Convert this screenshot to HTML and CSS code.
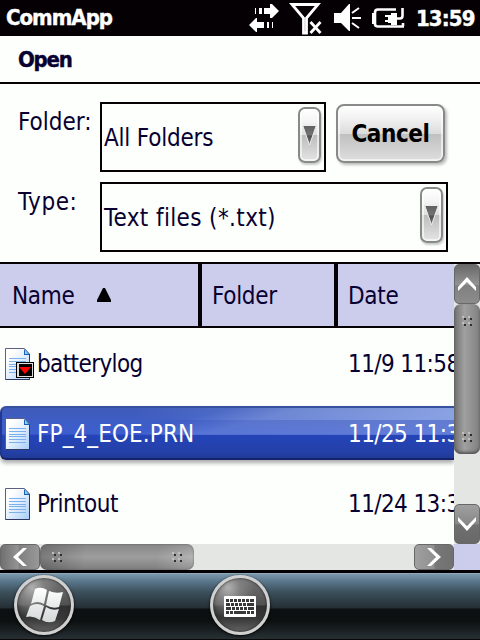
FILE: index.html
```html
<!DOCTYPE html>
<html lang="en">
<head>
<meta charset="utf-8">
<title>CommApp</title>
<link rel="stylesheet" href="styles.css">
</head>
<body>
<svg width="0" height="0" class="defs" aria-hidden="true">
  <defs>
    <linearGradient id="paper" x1="0" y1="0" x2="1" y2="1"><stop offset="0.2" stop-color="#fff"/><stop offset="0.5" stop-color="#e4f0fc"/><stop offset="1" stop-color="#a4ccfa"/></linearGradient>
    <linearGradient id="tri" x1="0" y1="0" x2="0" y2="1"><stop offset="0" stop-color="#606060"/><stop offset="0.5" stop-color="#747474"/><stop offset="0.52" stop-color="#505050"/><stop offset="1" stop-color="#707070"/></linearGradient>
    <linearGradient id="flag" x1="0" y1="0" x2="0" y2="1"><stop offset="0" stop-color="#fff"/><stop offset="1" stop-color="#d4d8d8"/></linearGradient>
    <g id="doc">
      <path d="M.5 .5H19.500L24.500 6V31.500H.5Z" fill="url(#paper)" stroke="#5c6080"/>
      <path d="M24.500 6V31.500H.5" fill="none" stroke="#303860"/>
      <path d="M19 1V7H25Z" fill="#1860b8"/><path d="M20 2V6H23Z" fill="#80dcff"/>
      <path d="M4 10.500H21M4 13.500H21M4 16.500H21M4 18.500H21M4 21.500H21M4 24.500H21" stroke="#7cb0ec"/>
    </g>
    <g id="dots">
      <path d="M0 0h2v2H0zM6 0h2v2H6zM0 6h2v2H0zM6 6h2v2H6z" fill="#c0c0c0"/>
      <path d="M2 2h2v2H2zM8 2h2v2H8zM2 8h2v2H2zM8 8h2v2H8z" fill="#303030"/>
    </g>
  </defs>
</svg>
<div class="screen">
  <header class="status">
    <span class="app">CommApp</span>
    <svg class="tray" width="168" height="36" viewBox="248 0 168 36">
      <g fill="#fff">
        <path d="M255 8h1v6h-1zM259 8h3v6h-3zM264 8h6V4h2l7 7-7 7h-2V14h-6z"/>
        <path d="M273 22h-1v6h1zM269 22h-2v6h2zM264 22h-7V18h-1l-7 7 7 7h1V28h7z"/>
        <path d="M334 13h7l8-9h1v27h-1l-8-8h-7z"/>
        <path d="M372 13h3v11h-3zM391 13h6v12h-6v-2h-3v-8h3zM385 15h4v2h-4zM385 20h4v2h-4z"/>
      </g>
      <g fill="none" stroke="#fff">
        <path d="M292 4.500h26L306.500 18V33h-3V18Z" stroke-width="2.800"/>
        <path d="M310.500 22l10 11M320.500 22l-10 11" stroke-width="2.800"/>
        <path d="M352 13l7-5M352 18h9M352 23l7 5" stroke-width="2"/>
        <path d="M396 9.500H378q-3 0-3 3V24q0 2.500 3 2.500H404M395 18.500h5q2.500 0 2.500-3V8M403 23v3" stroke-width="2.600"/>
      </g>
    </svg>
    <span class="clock">13:59</span>
  </header>
  <h1 class="title">Open</h1>
  <section class="form">
    <div class="line">
      <label class="label folder">Folder:</label>
      <div class="select short"><span class="all">All Folders</span>
        <span class="drop"><svg width="15" height="22" viewBox="0 0 15 22"><path d="M.7 1.500H14.300L7.500 21Z" fill="url(#tri)" stroke="#eee" stroke-width="1"/></svg></span></div>
      <button class="cancel">Cancel</button>
    </div>
    <div class="line">
      <label class="label type">Type:</label>
      <div class="select long"><span class="txt">Text files (*.txt)</span>
        <span class="drop"><svg width="15" height="22" viewBox="0 0 15 22"><path d="M.7 1.500H14.300L7.500 21Z" fill="url(#tri)" stroke="#eee" stroke-width="1"/></svg></span></div>
    </div>
  </section>
  <section class="browser">
    <div class="list">
      <div class="head">
        <div class="cell name"><span>Name</span><svg width="14" height="14"><path d="M6 0h2l6 12v2H0v-2z" fill="#000"/></svg></div>
        <div class="cell dir">Folder</div>
        <div class="cell date">Date</div>
      </div>
      <div class="row">
        <svg class="file" width="32" height="32"><use href="#doc"/><path d="M11 14h18v16H11z" fill="#000"/><path d="M12 15h16v14H12z" fill="#ddd"/><path d="M14 16h13v12H14z" fill="#000"/><path d="M14 19h12l-6 7z" fill="#f00"/></svg>
        <span class="fname n1">batterylog</span><span class="when">11/9 11:58</span>
      </div>
      <div class="row selected">
        <svg class="file" width="32" height="32"><use href="#doc"/></svg>
        <span class="fname n2">FP_4_EOE.PRN</span><span class="when">11/25 11:35</span>
      </div>
      <div class="row">
        <svg class="file" width="32" height="32"><use href="#doc"/></svg>
        <span class="fname n3">Printout</span><span class="when">11/24 13:35</span>
      </div>
    </div>
    <div class="vbar">
      <div class="arrow up"><svg width="26" height="40"><path d="M4 23L13 13L22 23V27L13 18L4 27Z" fill="#fff"/></svg></div>
      <div class="thumb"><svg width="10" height="10"><use href="#dots"/></svg><svg width="10" height="10"><use href="#dots"/></svg></div>
      <div class="arrow down"><svg width="26" height="40"><path d="M4 13L13 22L22 13V17L13 27L4 17Z" fill="#fff"/></svg></div>
    </div>
    <div class="hbar">
      <div class="arrow left"><svg width="40" height="26"><path d="M27 4H23L13 13L23 22H27L18 13Z" fill="#fff"/></svg></div>
      <div class="thumb"><svg width="10" height="10"><use href="#dots"/></svg><svg width="10" height="10"><use href="#dots"/></svg></div>
      <div class="arrow right"><svg width="40" height="26"><path d="M13 4H17L27 13L17 22H13L22 13Z" fill="#fff"/></svg></div>
    </div>
    <div class="corner"></div>
  </section>
  <footer class="dock">
    <div class="orb"><svg width="60" height="60" viewBox="14 575 60 60">
      <path d="M35 589Q41 586 47 590L44 604Q37 600 31 604ZM49 591Q56 594 63 592L59 607Q52 609 46 605ZM30 606Q37 602 44 606L40 620Q33 615 26 617ZM46 607Q52 611 59 609L55 621Q48 624 42 620Z" fill="url(#flag)"/></svg></div>
    <div class="orb"><svg width="60" height="60" viewBox="210 575 60 60">
      <rect x="224" y="596" width="32" height="21" rx="1" fill="#fff"/>
      <g stroke="#383838" stroke-width="3" fill="none">
        <path d="M226 600.500H254" stroke-dasharray="3 1 3 1 3 1 3 1 3 1 3 1 4"/>
        <path d="M226 604.500H254" stroke-dasharray="4 1 3 1 3 1 3 1 3 1 7"/>
        <path d="M226 608.500H254" stroke-dasharray="5 1 3 1 3 1 3 1 3 1 6"/>
        <path d="M226 612.500H254" stroke-dasharray="3 1 3 1 12 1 3 1 3"/>
      </g></svg></div>
  </footer>
</div>
</body>
</html>
```
FILE: styles.css
```css
* { box-sizing: border-box; }
body { margin: 0; font: 24px/28px "DejaVu Sans Condensed", "DejaVu Sans", sans-serif; font-stretch: condensed; color: #080030; }
svg { display: block; flex: none; }
.defs { position: absolute; }
.screen { width: 480px; height: 640px; background: #fcfffc; display: flex; flex-direction: column; overflow: hidden; }
.status { height: 36px; flex: none; background: #040004; color: #fff; display: flex; align-items: flex-start; padding: 4px 0 0 6px; font-weight: bold; font-size: 22px; white-space: nowrap; }
.app { width: 242px; flex: none; letter-spacing: -1px; -webkit-text-stroke: .4px; }
.tray { margin-top: -4px; }
.clock { letter-spacing: -.9px; padding-top: 1px; -webkit-text-stroke: .4px; }
.title { margin: 0; height: 48px; flex: none; padding: 10px 18px 0; border-bottom: 2px solid #040004; font-size: 22px; line-height: 28px; letter-spacing: -1.2px; -webkit-text-stroke: .4px; }
.form { height: 178px; flex: none; padding-top: 18px; display: flex; flex-direction: column; gap: 10px; }
.line { display: flex; height: 70px; padding-left: 18px; }
.label { width: 82px; padding-top: 6px; flex: none; white-space: nowrap; }
.type { letter-spacing: .6px; }
.select { border: 2px solid #040004; height: 70px; display: flex; justify-content: space-between; padding: 3px 3px 0 2px; white-space: nowrap; }
.select > span:first-child { padding-top: 17px; }
.all { letter-spacing: -.2px; }
.txt { letter-spacing: .37px; }
.short { width: 226px; }
.long { width: 348px; }
.drop { width: 23px; height: 56px; border: 2px solid #888a88; border-radius: 7px; display: flex; justify-content: center; padding-top: 15px; background: linear-gradient(#fff 0, #f4f4f4 25%, #dedede 50%, #bcbcbc 50%, #e4e4e4 100%); box-shadow: inset 0 0 0 2px rgba(255,255,255,.6), 1px 2px 2px #ccc; }
.cancel { margin: 2px 0 0 10px; width: 109px; height: 59px; border: 2px solid #888a88; border-radius: 8px; padding: 0; background: linear-gradient(#fff 0, #f2f2f2 22%, #dcdcdc 50%, #c0c0c0 51%, #dedede 100%); box-shadow: inset 0 0 0 2px rgba(255,255,255,.6), 2px 2px 3px #bbb; font: bold 24px/28px "DejaVu Sans Condensed", "DejaVu Sans", sans-serif; letter-spacing: -.4px; color: #000; }
.browser { height: 308px; flex: none; border-top: 2px solid #040004; display: grid; grid-template: 280px 26px / 454px 26px; }
.list { overflow: hidden; }
.head { height: 64px; background: #cccced; border-bottom: 2px solid #040004; display: flex; letter-spacing: -.3px; }
.cell { padding: 18px 0 0 10px; }
.name { width: 202px; padding-left: 12px; border-right: 4px solid #040004; display: flex; }
.name span { width: 85px; }
.name svg { margin-top: 6px; }
.dir { width: 136px; border-right: 4px solid #040004; }
.row { height: 54px; margin-bottom: 16px; display: flex; padding-left: 5px; white-space: nowrap; }
.head + .row { margin-top: 8px; }
.file { margin-top: 12px; }
.fname { width: 311px; flex: none; margin-top: 14px; }
.n1 { letter-spacing: -.6px; }
.n2 { letter-spacing: .1px; }
.n3 { letter-spacing: -.5px; }
.when { margin-top: 14px; letter-spacing: -.6px; flex: none; }
.selected { color: #fff; border-radius: 6px 0 0 6px; background: linear-gradient(165deg, rgba(255,255,255,0) 42%, rgba(255,255,255,.15) 55%, rgba(255,255,255,.2)) 0 0 / 100% 29px no-repeat, linear-gradient(90deg, rgba(160,190,250,0) 30%, rgba(160,190,250,.5)) 0 0 / 100% 14px no-repeat, linear-gradient(#405cb8, #3c5ed0 52%, #2444b8 54%, #2440a8 85%, #203890); box-shadow: inset 0 2px #3850a0, inset 0 -2px #14246c, inset 2px 0 #203890, 0 3px 4px #aaa; }
.vbar { background: #e4e6e4; display: flex; flex-direction: column; }
.arrow { border-radius: 5px; border: 1px solid #686868; flex: none; }
.arrow svg { margin: -1px; }
.up, .down { height: 40px; background: linear-gradient(#686868, #949494 52%, #808080 54%, #8c8c8c); }
.down { margin-top: auto; background: linear-gradient(#a0a0a0, #888 50%, #707070 52%, #686868); }
.thumb { display: flex; justify-content: space-between; flex: none; }
.vbar .thumb { height: 150px; flex-direction: column; align-items: center; padding: 12px 0; border-radius: 7px; background: linear-gradient(90deg, #707070, #a0a0a0 40%, #808080); box-shadow: inset 0 -2px 3px #555; }
.hbar { background: #e4e6e4; display: flex; }
.left, .right { width: 40px; height: 26px; background: linear-gradient(90deg, #707070, #949494 45%, #808080 48%, #989898); }
.right { margin-left: auto; background: linear-gradient(90deg, #a0a0a0, #909090 50%, #787878 53%, #707070); }
.hbar .thumb { width: 154px; height: 26px; padding: 8px 12px; border-radius: 7px; background: linear-gradient(rgba(120,120,120,.5), rgba(180,180,180,.3) 50%, rgba(90,90,90,.4)), linear-gradient(100deg, #606060, #949494 30%, #949494 75%, #b8b8b8); box-shadow: inset 0 0 2px #555; }
.corner { background: #cccced; }
.dock { height: 70px; flex: none; border-top: 3px solid #040004; display: flex; gap: 136px; padding: 2px 14px 0; background: linear-gradient(#a4b8c8 0, #7c98ac 1px, #587488 9px, #3c505c 19px, #242e34 35px, #0c1010 36px, #0c1010 48px, #283034 66px, #080808 66px); }
.orb { width: 60px; height: 60px; border-radius: 50%; border: 3px solid #d0d0d0; background: radial-gradient(ellipse at 28% 18%, #b0b0b0 0, #808080 22%, rgba(80,80,80,0) 48%), linear-gradient(#747474 0, #505050 50%, #303030 52%, #383838 75%, #646464); box-shadow: 0 1px 3px #000, inset 0 0 3px #222; }
.orb svg { margin: -3px; }
```
